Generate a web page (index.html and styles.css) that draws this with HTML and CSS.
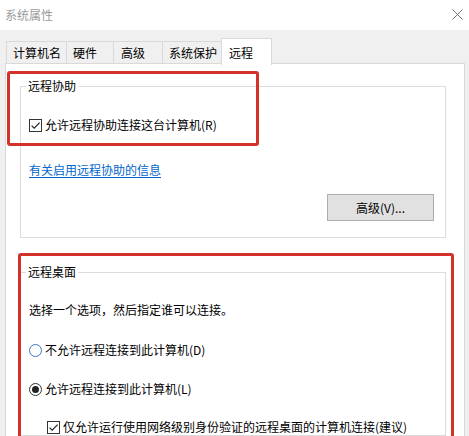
FILE: index.html
```html
<!DOCTYPE html>
<html lang="zh-CN">
<head>
<meta charset="utf-8">
<title>系统属性</title>
<link rel="stylesheet" href="styles.css">
</head>
<body>
<div class="window">
  <div class="titlebar">
    <span class="title">系统属性</span>
    <svg class="close" width="11" height="11" viewBox="0 0 11 11"><path d="M0.5 0.5 L10.5 10.5 M10.5 0.5 L0.5 10.5" stroke="#707070" stroke-width="1" fill="none"/></svg>
  </div>
  <div class="tabs">
    <div class="tab t1">计算机名</div>
    <div class="tab t2">硬件</div>
    <div class="tab t3">高级</div>
    <div class="tab t4">系统保护</div>
    <div class="tab t5 active">远程</div>
  </div>
  <div class="panel">
    <fieldset class="group g1">
      <legend>远程协助</legend>
      <div class="row check-row r-assist">
        <svg class="box" width="13" height="13" viewBox="0 0 13 13"><rect x="0.5" y="0.5" width="12" height="12" fill="#fff" stroke="#333"/><path d="M2.6 6.6 L5.2 9.2 L10.6 3.6" stroke="#222" stroke-width="1.2" fill="none"/></svg>
        <span>允许远程协助连接这台计算机(R)</span>
      </div>
      <div class="row r-link"><a class="link">有关启用远程协助的信息</a></div>
      <div class="btn-row"><button class="btn">高级(V)...</button></div>
    </fieldset>
    <fieldset class="group g2">
      <legend>远程桌面</legend>
      <div class="row r-intro">选择一个选项，然后指定谁可以连接。</div>
      <div class="row check-row r-radio1">
        <svg class="box" width="13" height="13" viewBox="0 0 13 13"><circle cx="6.5" cy="6.5" r="6" fill="#fff" stroke="#3a78b8"/></svg>
        <span>不允许远程连接到此计算机(D)</span>
      </div>
      <div class="row check-row r-radio2">
        <svg class="box" width="13" height="13" viewBox="0 0 13 13"><circle cx="6.5" cy="6.5" r="6" fill="#fff" stroke="#333"/><circle cx="6.5" cy="6.5" r="3.5" fill="#222"/></svg>
        <span>允许远程连接到此计算机(L)</span>
      </div>
      <div class="row check-row r-nla">
        <svg class="box" width="13" height="13" viewBox="0 0 13 13"><rect x="0.5" y="0.5" width="12" height="12" fill="#fff" stroke="#333"/><path d="M2.6 6.6 L5.2 9.2 L10.6 3.6" stroke="#222" stroke-width="1.2" fill="none"/></svg>
        <span>仅允许运行使用网络级别身份验证的远程桌面的计算机连接(建议)</span>
      </div>
    </fieldset>
  </div>
  <div class="mark mark1"></div>
  <div class="mark mark2"></div>
</div>
</body>
</html>
```
FILE: styles.css
```css
* { box-sizing: border-box; }
html, body { margin: 0; padding: 0; }
body {
  width: 469px;
  height: 436px;
  overflow: hidden;
  background: #f0f0f0;
  font-family: "Noto Sans CJK SC", "Microsoft YaHei", sans-serif;
  font-size: 12px;
  line-height: 16px;
  color: #000;
}
.window { position: relative; width: 469px; height: 436px; overflow: hidden; }
.titlebar {
  height: 30px;
  background: #fff;
  display: flex;
  align-items: center;
  justify-content: space-between;
  padding: 0 6px 0 5px;
}
.title { color: #9a9a9a; font-size: 12px; }
.close { display: block; margin-top: -1px; }
.tabs {
  display: flex;
  align-items: flex-end;
  padding-left: 6px;
  margin-top: 8px;
  height: 25px;
  position: relative;
  z-index: 2;
}
.tab {
  height: 23px;
  border: 1px solid #d9d9d9;
  border-right: none;
  background: #f0f0f0;
  padding-left: 6px;
  line-height: 21px;
  margin-bottom: -1px;
}
.t1 { width: 60px; }
.t2 { width: 47px; }
.t3 { width: 49px; padding-left: 7px; }
.t4 { width: 59px; }
.tab.active {
  width: 51px;
  height: 27px;
  background: #fff;
  border-right: 1px solid #d9d9d9;
  border-bottom: none;
  padding-left: 7px;
  line-height: 27px;
  margin-bottom: -2px;
}
.panel {
  margin-left: 5px;
  width: 460px;
  height: 420px;
  background: #fff;
  border: 1px solid #d9d9d9;
  padding: 0 18px 0 14px;
  position: relative;
  z-index: 1;
}
.group {
  margin: 0;
  border: 1px solid #dcdcdc;
  padding: 0 11px 0 8px;
  min-width: 0;
}
.group legend {
  padding: 0 2px;
  margin-left: -3px;
  line-height: 16px;
}
.g1 { margin-top: 14px; padding-bottom: 16px; }
.g2 { margin-top: 26px; }
.row { height: 16px; line-height: 16px; white-space: nowrap; }
.check-row { display: flex; align-items: center; gap: 3px; }
.box { display: block; flex: none; }
.r-assist { margin-top: 23px; }
.r-link { margin-top: 29px; }
.link { color: #0066cc; text-decoration: underline; text-underline-offset: 2px; }
.btn-row { display: flex; justify-content: flex-end; margin-top: 16px; }
.btn {
  width: 107px;
  height: 27px;
  background: #e1e1e1;
  border: 1px solid #adadad;
  font-family: inherit;
  font-size: 12px;
  color: #000;
  padding: 0;
  margin: 0;
}
.r-intro { margin-top: 22px; }
.r-radio1 { margin-top: 24px; }
.r-radio2 { margin-top: 23px; }
.r-nla { margin-top: 22px; padding-left: 18px; }
.mark {
  position: absolute;
  border: 3px solid #d3322b;
  border-radius: 3px;
  z-index: 5;
  pointer-events: none;
}
.mark1 { left: 7px; top: 71px; width: 252px; height: 75px; }
.mark2 { left: 18px; top: 253px; width: 436px; height: 220px; }
```
